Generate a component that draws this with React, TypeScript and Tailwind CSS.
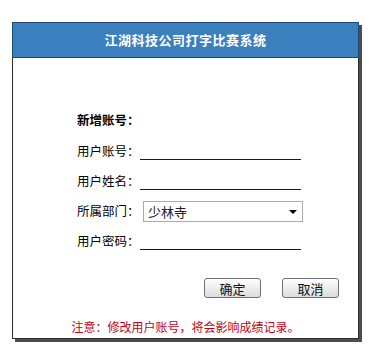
import { useState } from "react";

const font = { fontFamily: '"SimSun", "Noto Sans CJK SC", sans-serif' };

function UnderlineInput({ value, onChange }: { value: string; onChange: (v: string) => void }) {
    return (
        <input
            value={value}
            onChange={(e) => onChange(e.target.value)}
            className="w-[161px] h-[17px] border-0 border-b border-b-[#14144a] bg-transparent outline-none text-[12px] px-1"
        />
    );
}

export default function App() {
    const [account, setAccount] = useState("");
    const [name, setName] = useState("");
    const [password, setPassword] = useState("");
    const [dept, setDept] = useState("少林寺");

    return (
        <div className="w-[369px] h-[352px] bg-white pt-[22px] pl-[12px]" style={font}>
            <div className="w-[347px] h-[317px] border border-[#2e2e2e] bg-white shadow-[3px_3px_0_#4d4d4d] flex flex-col">
                {/* 标题栏 */}
                <div className="h-[36px] -mx-px -mt-px bg-[#3a80bf] border border-[#1d4a72] flex items-center justify-center">
                    <h1 className="text-white text-[13px] font-bold tracking-[0.5px]">江湖科技公司打字比赛系统</h1>
                </div>

                {/* 表单 */}
                <div className="pt-[46px] pl-[64px] text-[12.5px] text-black">
                    <div className="h-[32px] flex items-center font-bold">新增账号：</div>
                    <div className="h-[30px] flex items-center">
                        <span className="w-[63px]">用户账号：</span>
                        <UnderlineInput value={account} onChange={setAccount} />
                    </div>
                    <div className="h-[30px] flex items-center">
                        <span className="w-[63px]">用户姓名：</span>
                        <UnderlineInput value={name} onChange={setName} />
                    </div>
                    <div className="h-[30px] flex items-center">
                        <span className="w-[63px]">所属部门：</span>
                        <div className="relative ml-[3px] w-[160px] h-[21px] border border-[#a5acb2] bg-white flex items-center">
                            <select
                                value={dept}
                                onChange={(e) => setDept(e.target.value)}
                                className="appearance-none w-full h-full pl-[4px] bg-transparent outline-none text-[13px] text-[#222]"
                            >
                                <option>少林寺</option>
                                <option>武当派</option>
                                <option>峨眉派</option>
                            </select>
                            <span className="pointer-events-none absolute right-[5px] top-[8px] w-0 h-0 border-l-[4px] border-r-[4px] border-t-[4px] border-l-transparent border-r-transparent border-t-black" />
                        </div>
                    </div>
                    <div className="h-[30px] flex items-center">
                        <span className="w-[63px]">用户密码：</span>
                        <UnderlineInput value={password} onChange={setPassword} />
                    </div>
                </div>

                {/* 按钮 */}
                <div className="mt-[22px] pr-[19px] flex justify-end gap-[21px]">
                    <button className="w-[57px] h-[20px] rounded-[3px] border border-[#707070] bg-gradient-to-b from-white to-[#dcdcdc] text-[13px] text-[#111] leading-none">
                        确定
                    </button>
                    <button className="w-[57px] h-[20px] rounded-[3px] border border-[#707070] bg-gradient-to-b from-white to-[#dcdcdc] text-[13px] text-[#111] leading-none">
                        取消
                    </button>
                </div>

                {/* 提示 */}
                <p className="mt-[20px] text-center text-[12px] text-[#c40018]">注意：修改用户账号，将会影响成绩记录。</p>
            </div>
        </div>
    );
}
